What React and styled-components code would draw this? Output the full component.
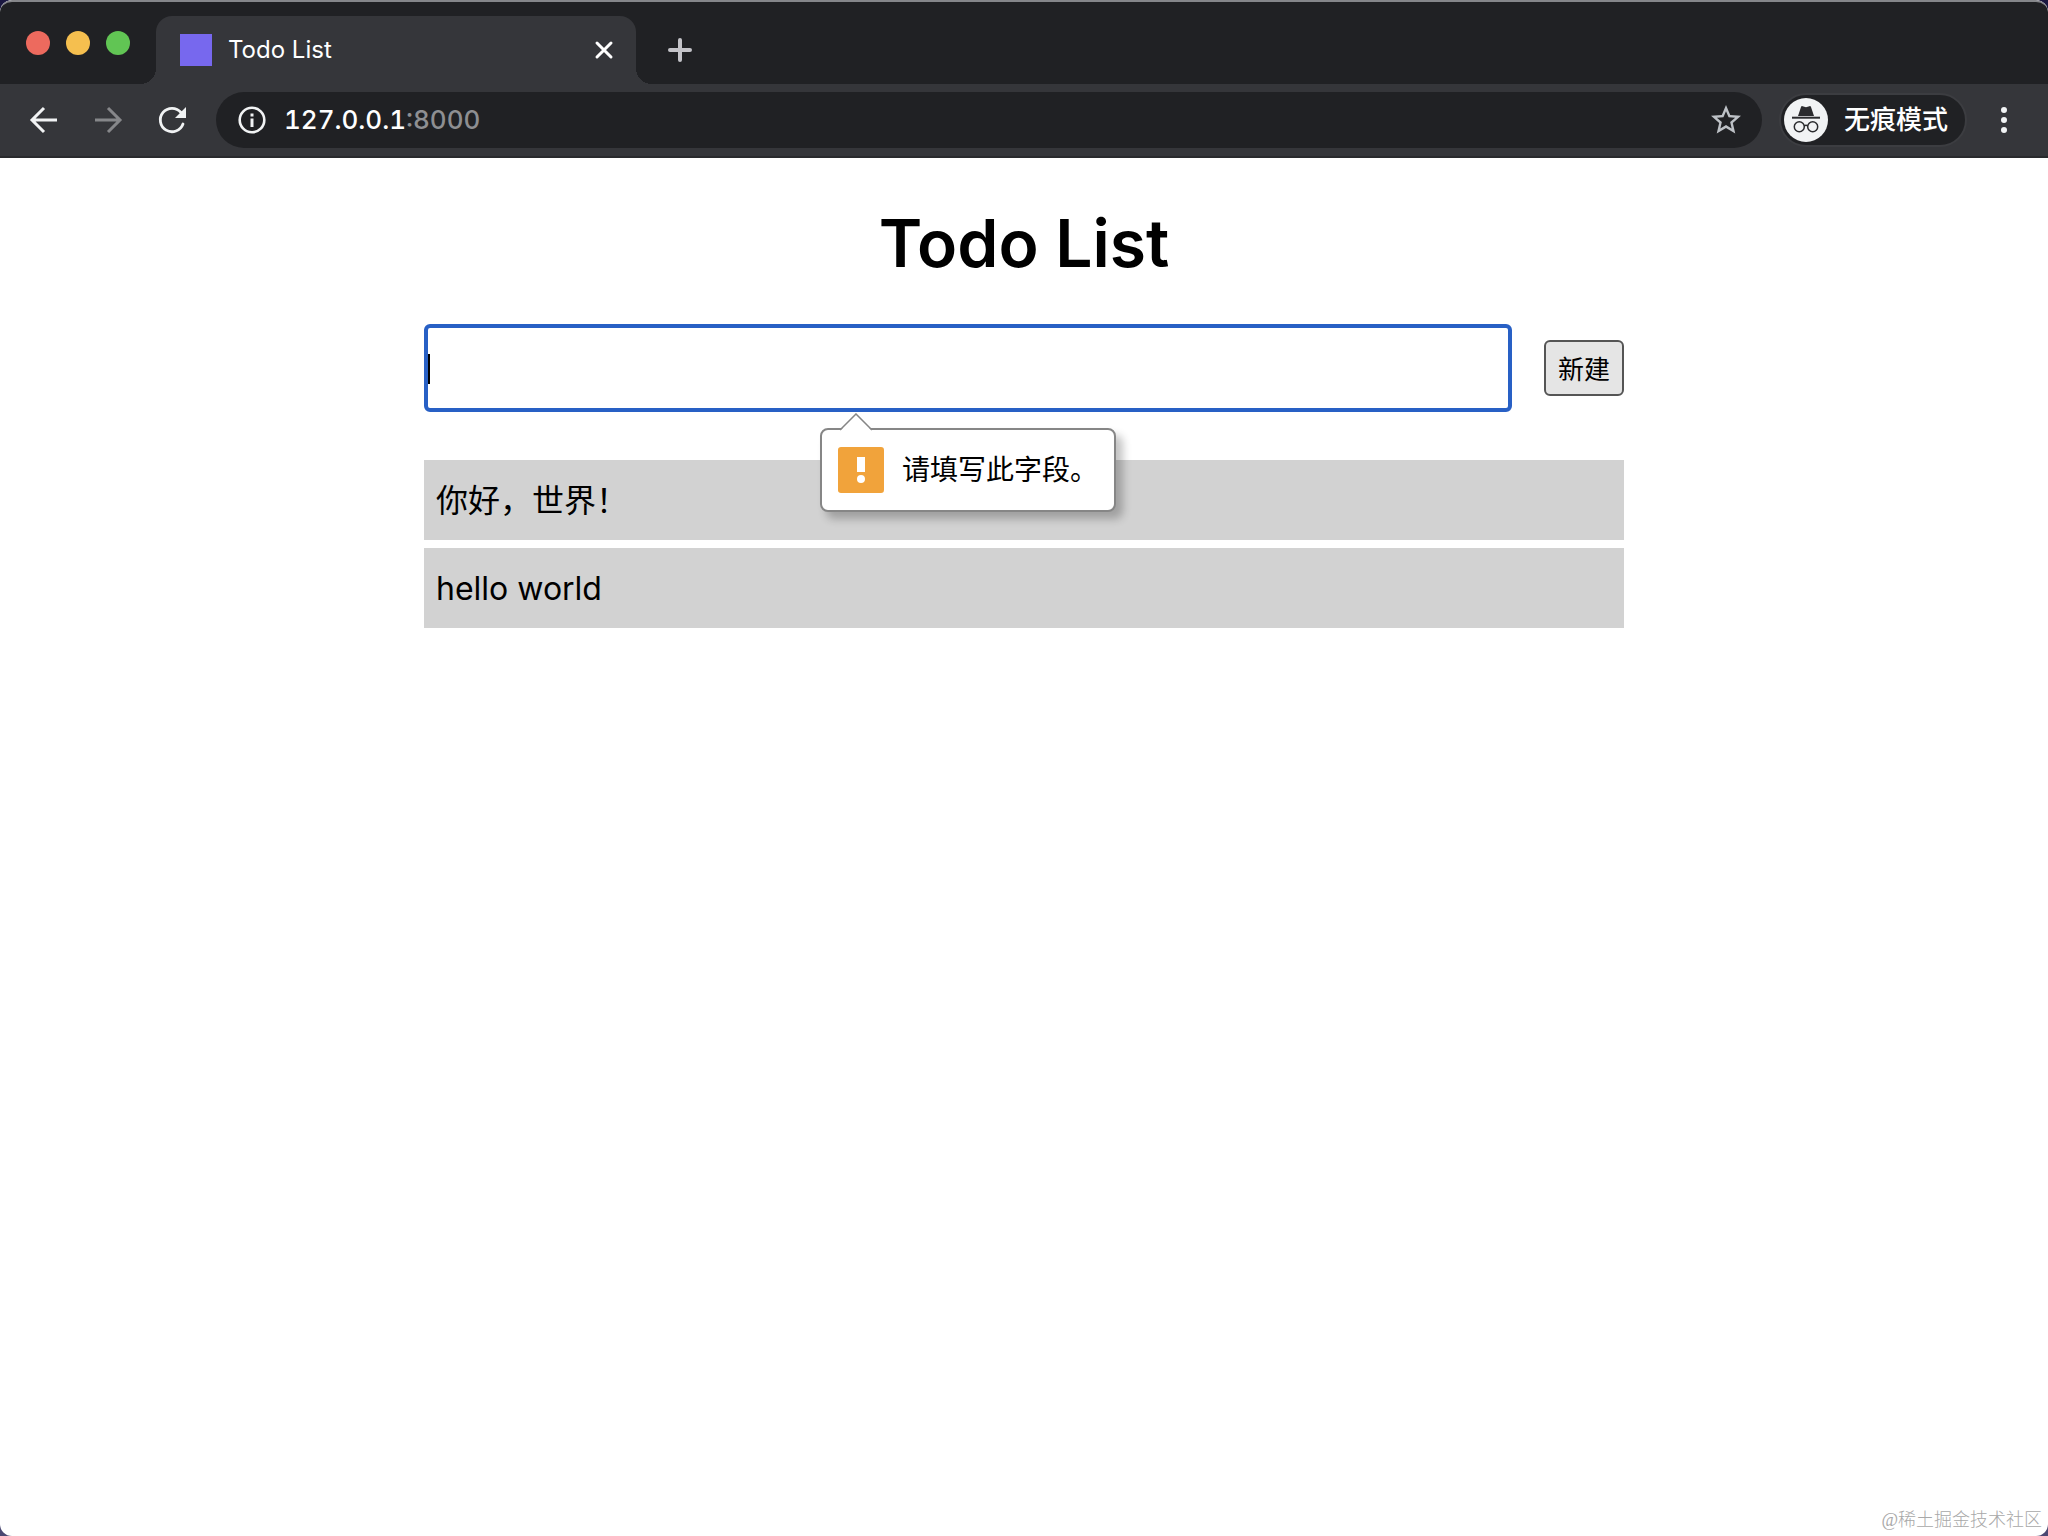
import { useState } from "react";
import styled, { createGlobalStyle } from "styled-components";

const App = () => {
  const [todos, setTodos] = useState(["你好，世界！", "hello world"]);
  const [text, setText] = useState("");

  const handleSubmit = (event) => {
    event.preventDefault();
    if (!text.trim()) return;
    setTodos([...todos, text]);
    setText("");
  };

  return (
    <>
      <GlobalStyle />
      <Window>
        <TabStrip>
          <TrafficLights>
            <Light $color="#ed6a5e" />
            <Light $color="#f5bf4f" />
            <Light $color="#61c554" />
          </TrafficLights>
          <Tab>
            <Favicon />
            <TabTitle>Todo List</TabTitle>
            <IconButton type="button" aria-label="关闭标签页" $width={32}>
              <CloseIcon />
            </IconButton>
          </Tab>
          <IconButton type="button" aria-label="新标签页" $width={88}>
            <PlusIcon />
          </IconButton>
        </TabStrip>

        <Toolbar>
          <NavButtons>
            <IconButton type="button" aria-label="后退" $width={64}>
              <ArrowIcon color="#f1f3f4" />
            </IconButton>
            <IconButton type="button" aria-label="前进" $width={64} disabled>
              <ArrowIcon color="#86878a" flipped />
            </IconButton>
            <IconButton type="button" aria-label="重新加载" $width={64}>
              <ReloadIcon />
            </IconButton>
          </NavButtons>
          <AddressBar>
            <InfoIcon />
            <Url>
              127.0.0.1<Port>:8000</Port>
            </Url>
            <IconButton type="button" aria-label="收藏" $width={72}>
              <StarIcon />
            </IconButton>
          </AddressBar>
          <Incognito type="button">
            <IncognitoIcon />
            无痕模式
          </Incognito>
          <IconButton type="button" aria-label="菜单" $width={74}>
            <MenuIcon />
          </IconButton>
        </Toolbar>

        <Page>
          <Title>Todo List</Title>
          <Form onSubmit={handleSubmit} noValidate>
            <Field>
              <Input
                aria-label="待办事项"
                value={text}
                onChange={(event) => setText(event.target.value)}
                required
              />
              {/* Aviso de campo obrigatório enquanto o texto está vazio */}
              {!text && (
                <>
                  <Caret />
                  <Tooltip role="alert">
                    <TooltipArrow width="34" height="18" viewBox="0 0 34 18">
                      <path d="M1 18 17 1l16 17z" fill="#fff" />
                      <path d="M1 17 17 1l16 16" fill="none" stroke="#868686" strokeWidth="1.5" />
                    </TooltipArrow>
                    <WarningIcon />
                    请填写此字段。
                  </Tooltip>
                </>
              )}
            </Field>
            <SubmitButton type="submit">新建</SubmitButton>
          </Form>
          <List>
            {todos.map((todo, index) => (
              <Item key={index}>{todo}</Item>
            ))}
          </List>
          <Watermark>@稀土掘金技术社区</Watermark>
        </Page>
      </Window>
    </>
  );
};

export default App;

// Ícones
const CloseIcon = () => (
  <svg width="20" height="20" viewBox="0 0 20 20">
    <path d="M3 3l14 14M17 3 3 17" stroke="#fff" strokeWidth="3" strokeLinecap="round" />
  </svg>
);

const PlusIcon = () => (
  <svg width="24" height="24" viewBox="0 0 24 24">
    <path d="M12 2v20M2 12h20" stroke="#c4c4c9" strokeWidth="4" strokeLinecap="round" />
  </svg>
);

const ArrowIcon = ({ color, flipped }) => (
  <svg width="32" height="32" viewBox="0 0 32 32">
    <path
      d={flipped ? "M3 16h24M16 4l12 12-12 12" : "M29 16H5M16 4 4 16l12 12"}
      fill="none"
      stroke={color}
      strokeWidth="3"
    />
  </svg>
);

const ReloadIcon = () => (
  <svg width="32" height="32" viewBox="0 0 32 32">
    <path d="M27 20A11.7 11.7 0 1 1 25 8.5" fill="none" stroke="#f1f3f4" strokeWidth="2.8" strokeLinecap="round" />
    <path d="M30 3v11H19z" fill="#f1f3f4" />
  </svg>
);

const InfoIcon = () => (
  <svg width="28" height="28" viewBox="0 0 28 28">
    <circle cx="14" cy="14" r="12.3" fill="none" stroke="#f1f3f4" strokeWidth="2.6" />
    <path d="M12.5 7.5h3v3h-3zM12.5 12.5h3v8.5h-3z" fill="#f1f3f4" />
  </svg>
);

const StarIcon = () => (
  <svg width="36" height="36" viewBox="0 0 24 24">
    <path
      fill="#bdc1c6"
      d="M22 9.24l-7.19-.62L12 2 9.19 8.63 2 9.24l5.46 4.73L5.82 21 12 17.27 18.18 21l-1.63-7.03L22 9.24zM12 15.4l-3.76 2.27 1-4.28-3.32-2.88 4.38-.38L12 6.1l1.71 4.04 4.38.38-3.32 2.88 1 4.28L12 15.4z"
    />
  </svg>
);

const IncognitoIcon = () => (
  <svg width="44" height="44" viewBox="0 0 44 44">
    <circle cx="22" cy="22" r="22" fill="#f1f3f4" />
    <path d="M14 18l3-9q.4-1.2 1.6-.8L22 9.2l3.4-1q1.2-.4 1.6.8l3 9z" fill="#2a2b2e" />
    <path d="M8 18.7h28v2H8z" fill="#2a2b2e" />
    <g fill="none" stroke="#2a2b2e" strokeWidth="1.5">
      <circle cx="15.3" cy="28.8" r="5" />
      <circle cx="28.7" cy="28.8" r="5" />
      <path d="M20.2 28q1.8-1.4 3.6 0" />
    </g>
  </svg>
);

const MenuIcon = () => (
  <svg width="8" height="28" viewBox="0 0 8 28" fill="#f1f3f4">
    <circle cx="4" cy="4" r="3" />
    <circle cx="4" cy="14" r="3" />
    <circle cx="4" cy="24" r="3" />
  </svg>
);

const WarningIcon = () => (
  <svg width="46" height="46" viewBox="0 0 46 46">
    <rect width="46" height="46" rx="3" fill="#f1a33b" />
    <path d="M19 10h8v15h-8z" fill="#fff" />
    <circle cx="23" cy="32" r="4" fill="#fff" />
  </svg>
);

// Estilos
const GlobalStyle = createGlobalStyle`
  * {
    box-sizing: border-box;
  }

  body {
    margin: 0;
    background: linear-gradient(#1a1740, #4b4872);
    font-family: Inter, "Noto Sans CJK SC", sans-serif;
  }

  button,
  input {
    font-family: inherit;
  }

  svg {
    display: block;
    flex-shrink: 0;
  }
`;

const Window = styled.div`
  display: flex;
  flex-direction: column;
  min-height: 100vh;
  overflow: hidden;
  border-radius: 12px;
  background: #fff;
`;

const TabStrip = styled.header`
  display: flex;
  align-items: flex-end;
  height: 84px;
  border-top: 2px solid #85868a;
  border-radius: 12px 12px 0 0;
  background: #202124;
`;

const TrafficLights = styled.div`
  display: flex;
  gap: 16px;
  width: 156px;
  padding: 0 26px 29px;
`;

const Light = styled.span`
  width: 24px;
  height: 24px;
  border-radius: 50%;
  background: ${({ $color }) => $color};
`;

const Tab = styled.div`
  position: relative;
  display: flex;
  align-items: center;
  width: 480px;
  height: 68px;
  padding: 0 16px 0 24px;
  border-radius: 16px 16px 0 0;
  background: #35363a;

  /* cantos invertidos na base da aba */
  &::before,
  &::after {
    content: "";
    position: absolute;
    bottom: 0;
    width: 16px;
    height: 16px;
  }

  &::before {
    right: 100%;
    background: radial-gradient(circle at 0 0, transparent 16px, #35363a 16px);
  }

  &::after {
    left: 100%;
    background: radial-gradient(circle at 100% 0, transparent 16px, #35363a 16px);
  }
`;

const Favicon = styled.span`
  width: 32px;
  height: 32px;
  background: #7768ee;
`;

const TabTitle = styled.span`
  flex: 1;
  padding-left: 16px;
  color: #fff;
  font-size: 24px;
  line-height: 32px;
`;

const IconButton = styled.button`
  display: flex;
  align-items: center;
  justify-content: center;
  flex-shrink: 0;
  width: ${({ $width }) => $width}px;
  height: 68px;
  padding: 0;
  border: none;
  background: none;
  cursor: pointer;
`;

const Toolbar = styled.nav`
  display: flex;
  align-items: center;
  height: 74px;
  padding: 0 7px 0 12px;
  border-bottom: 2px solid #292a2d;
  background: #35363a;
`;

const NavButtons = styled.div`
  display: flex;
  margin-right: 12px;
`;

const AddressBar = styled.div`
  display: flex;
  align-items: center;
  flex: 1;
  height: 56px;
  margin-right: 17px;
  padding-left: 22px;
  border-radius: 28px;
  background: #202124;
`;

const Url = styled.span`
  flex: 1;
  padding-left: 18px;
  color: #fff;
  font-size: 26px;
  font-weight: 500;
  font-variant-numeric: tabular-nums;
  line-height: 36px;
`;

const Port = styled.span`
  color: #8e8f92;
`;

const Incognito = styled.button`
  display: flex;
  align-items: center;
  gap: 16px;
  height: 54px;
  padding: 0 17px 0 3px;
  border: 2px solid #3c3d41;
  border-radius: 27px;
  background: #202124;
  color: #fff;
  font-size: 26px;
  font-weight: 500;
  line-height: 36px;
`;

const Page = styled.main`
  display: flex;
  flex-direction: column;
  align-items: center;
  flex: 1;
  color: #000;
`;

const Title = styled.h1`
  margin: 45px 0 41px;
  font-size: 66px;
  font-weight: 600;
  line-height: 80px;
`;

const Form = styled.form`
  display: flex;
  align-items: center;
  gap: 32px;
  width: 100%;
  max-width: 1200px;
`;

const Field = styled.div`
  position: relative;
  flex: 1;
`;

const Input = styled.input`
  display: block;
  width: 100%;
  height: 88px;
  padding: 0;
  border: 4px solid #2860c5;
  border-radius: 6px;
  outline: none;
  font-size: 26px;
`;

const Caret = styled.span`
  position: absolute;
  top: 30px;
  left: 4px;
  width: 2px;
  height: 30px;
  background: #000;
`;

const Tooltip = styled.div`
  position: absolute;
  top: 104px;
  left: 50%;
  display: flex;
  align-items: center;
  gap: 18px;
  height: 84px;
  padding: 0 16px;
  transform: translateX(-50%);
  border: 2px solid #868686;
  border-radius: 8px;
  background: #fff;
  box-shadow: 7px 7px 8px rgba(0, 0, 0, 0.24);
  font-size: 28px;
  line-height: 40px;
  white-space: nowrap;
`;

const TooltipArrow = styled.svg`
  position: absolute;
  bottom: 100%;
  left: 17px;
  margin-bottom: -1px;
`;

const SubmitButton = styled.button`
  width: 80px;
  height: 56px;
  padding: 4px 0 0;
  border: 2px solid #555;
  border-radius: 6px;
  background: #e5e5e5;
  color: #000;
  font-size: 26px;
  line-height: 36px;
`;

const List = styled.ul`
  display: flex;
  flex-direction: column;
  gap: 8px;
  width: 100%;
  max-width: 1200px;
  margin: 48px 0;
  padding: 0;
  list-style: none;
`;

const Item = styled.li`
  padding: 17px 12px 15px;
  background: #d2d2d2;
  font-size: 32px;
  line-height: 48px;
`;

const Watermark = styled.footer`
  align-self: flex-end;
  margin-top: auto;
  padding: 0 6px 4px;
  color: #a8a8a8;
  font-family: "Liberation Serif", "Noto Sans CJK SC", serif;
  font-size: 18px;
  font-weight: 300;
  line-height: 24px;
`;
